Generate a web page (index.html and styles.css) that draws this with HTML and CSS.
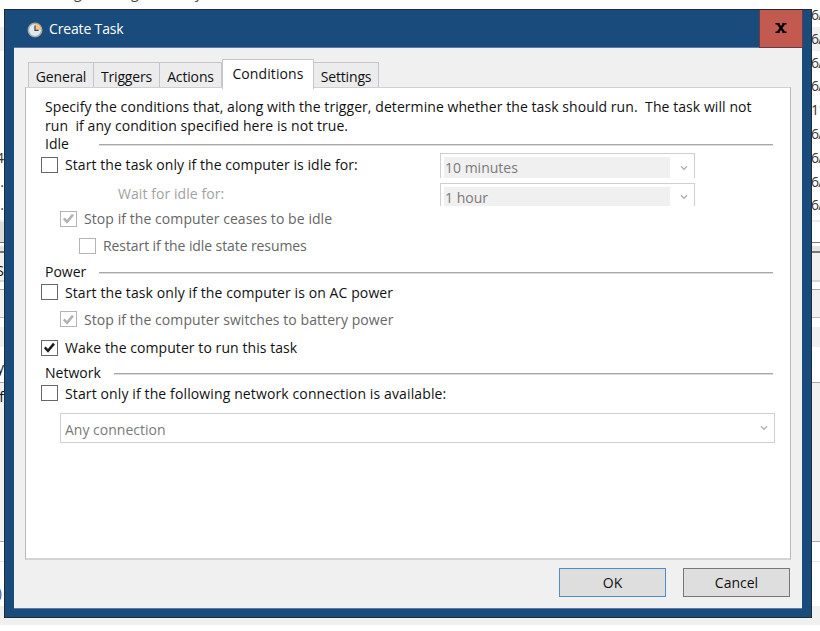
FILE: index.html
```
<!DOCTYPE html>
<html lang="en">
  <head>
    <meta charset="UTF-8" />
    <meta name="viewport" content="width=device-width, initial-scale=1.0">
    <title>Create Task</title>
    <link rel="stylesheet" href="styles.css">
  </head>
  <body>
    <!-- Task Scheduler window behind the dialog -->
    <div class="backdrop">
      <div class="top-line"><span>g</span><span>g</span><span>y</span></div>
      <div class="task-list">
        <div class="task-row"><span></span><span>6/</span></div>
        <div class="task-row selected"><span></span><span>6/</span></div>
        <div class="task-row"><span></span><span>6/</span></div>
        <div class="task-row"><span></span><span>6/</span></div>
        <div class="task-row"><span></span><span>11</span></div>
        <div class="task-row"><span></span><span>6/</span></div>
        <div class="task-row"><span>4</span><span>6/</span></div>
        <div class="task-row"><span>3.</span><span>6/</span></div>
        <div class="task-row"><span>-.</span><span>6/</span></div>
      </div>
      <div class="scroll-row"><div class="scroll-thumb"></div></div>
      <div class="splitter"></div>
      <div class="strip strip-tabs"><span>S</span></div>
      <div class="strip strip-gap"></div>
      <div class="strip strip-header"></div>
      <div class="strip strip-space"></div>
      <div class="strip strip-label"></div>
      <div class="strip strip-field"><span>y</span></div>
      <div class="strip strip-body"><span>f</span></div>
      <div class="strip strip-line"></div>
      <div class="strip strip-link"><span>)</span></div>
      <div class="strip strip-status"></div>
    </div>

    <div class="dialog">
      <div class="titlebar">
        <svg class="title-icon" width="16" height="16" viewBox="0 0 16 16">
          <circle cx="8" cy="8" r="7.5" fill="#a9a49c"/>
          <circle cx="8" cy="8" r="6" fill="#dcebf5"/>
          <path d="M8 8V2A6 6 0 0 1 14 8Z" fill="#f5c67e"/>
          <path d="M8 3.6V8.4H11.6" fill="none" stroke="#41474f" stroke-width="1.3"/>
        </svg>
        <span class="title">Create Task</span>
        <button class="close">
          <svg width="12" height="12" viewBox="0 0 12 12">
            <path d="M0.5 1.7H4.6M7.4 1.7H11.5M0.5 10.3H4.6M7.4 10.3H11.5" stroke="#000" stroke-width="1.4"/>
            <path d="M2.6 1.4L9.4 10.6M9.4 1.4L2.6 10.6" stroke="#000" stroke-width="2.4"/>
          </svg>
        </button>
      </div>

      <div class="client">
        <div class="tabs">
          <div class="tab tab-general">General</div>
          <div class="tab tab-triggers">Triggers</div>
          <div class="tab tab-actions">Actions</div>
          <div class="tab tab-conditions active">Conditions</div>
          <div class="tab tab-settings">Settings</div>
        </div>

        <div class="pane">
          <p class="intro">Specify the conditions that, along with the trigger, determine whether the task should run.&nbsp; The task will not<br>run&nbsp; if any condition specified here is not true.</p>

          <div class="group-head head-idle"><span>Idle</span><i></i></div>
          <div class="row row-idle">
            <span class="box"></span>
            <span class="label">Start the task only if the computer is idle for:</span>
            <div class="combo"><span class="value">10 minutes</span>
              <svg class="arrow" width="8" height="6" viewBox="0 0 8 6"><path d="M1 1.2L4 4.2L7 1.2"/></svg>
            </div>
          </div>
          <div class="row row-wait">
            <span class="label faint">Wait for idle for:</span>
            <div class="combo"><span class="value">1 hour</span>
              <svg class="arrow" width="8" height="6" viewBox="0 0 8 6"><path d="M1 1.2L4 4.2L7 1.2"/></svg>
            </div>
          </div>
          <div class="row row-stop disabled">
            <span class="box"><svg width="13" height="13" viewBox="0 0 13 13"><path d="M1.8 6.4L5 9.8L11 2.6"/></svg></span>
            <span class="label">Stop if the computer ceases to be idle</span>
          </div>
          <div class="row row-restart disabled">
            <span class="box"></span>
            <span class="label">Restart if the idle state resumes</span>
          </div>

          <div class="group-head head-power"><span>Power</span><i></i></div>
          <div class="row row-ac">
            <span class="box"></span>
            <span class="label">Start the task only if the computer is on AC power</span>
          </div>
          <div class="row row-battery disabled">
            <span class="box"><svg width="13" height="13" viewBox="0 0 13 13"><path d="M1.8 6.4L5 9.8L11 2.6"/></svg></span>
            <span class="label">Stop if the computer switches to battery power</span>
          </div>
          <div class="row row-wake">
            <span class="box"><svg width="13" height="13" viewBox="0 0 13 13"><path d="M1.8 6.4L5 9.8L11 2.6"/></svg></span>
            <span class="label">Wake the computer to run this task</span>
          </div>

          <div class="group-head head-network"><span>Network</span><i></i></div>
          <div class="row row-network">
            <span class="box"></span>
            <span class="label">Start only if the following network connection is available:</span>
          </div>
          <div class="combo combo-wide"><span class="value">Any connection</span>
            <svg class="arrow" width="8" height="6" viewBox="0 0 8 6"><path d="M1 1.2L4 4.2L7 1.2"/></svg>
          </div>
        </div>

        <div class="buttons">
          <button class="btn btn-default">OK</button>
          <button class="btn">Cancel</button>
        </div>
      </div>
    </div>
  </body>
</html>
```
FILE: styles.css
```
* {
  box-sizing: border-box;
}

body {
  margin: 0;
  width: 820px;
  height: 631px;
  overflow: hidden;
  position: relative;
  background: #fff;
  font-family: "Open Sans", "Noto Sans", sans-serif;
  font-size: 14px;
  color: #111;
}

/* window behind */
.backdrop {
  display: flex;
  flex-direction: column;
  height: 631px;
}

.top-line {
  height: 3px;
  padding: 0 0 1px 74px;
  line-height: 19px;
  display: flex;
  align-items: flex-end;
  overflow: hidden;
  color: #444;
}

.top-line span {
  width: 57px;
}

.top-line span:nth-child(2) {
  width: 64px;
}

.task-list {
  height: 217px;
  display: grid;
  grid-template-rows: repeat(9, 23.8px);
}

.task-row {
  display: flex;
  justify-content: space-between;
  line-height: 24px;
  white-space: nowrap;
  color: #333;
}

.task-row.selected {
  background: #f0f0f0;
}

.task-row span:first-child {
  width: 4px;
  display: flex;
  justify-content: flex-end;
}

.task-row span:last-child {
  width: 9px;
  letter-spacing: -0.8px;
}

.scroll-row {
  height: 23px;
  border-top: 2px solid #ebebeb;
  border-bottom: 1px solid #777;
}

.scroll-thumb {
  width: 200px;
  height: 20px;
  background: #dcdcdc;
}

.splitter {
  height: 10px;
  border-bottom: 2px solid #777;
  background: linear-gradient(#fff 3px, #e4e4e4 3px);
}

.strip {
  overflow: hidden;
}

.strip span {
  display: flex;
  justify-content: flex-end;
  width: 4px;
}

.strip-tabs {
  height: 29px;
  line-height: 36px;
  background: #f0f0f0;
  border-bottom: 2px solid #d5d5da;
}

.strip-gap {
  height: 7px;
}

.strip-header {
  height: 29px;
  background: #f0f0f0;
  border-top: 1px solid #aaa;
  border-bottom: 1px solid #bbb;
}

.strip-space {
  height: 9px;
}

.strip-label {
  height: 20px;
  background: #f0f0f0;
}

.strip-field {
  height: 36px;
  line-height: 42px;
  border-bottom: 1px solid #aaa;
}

.strip-body {
  height: 159px;
  line-height: 28px;
  background: #f0f0f0;
  border-bottom: 1px solid #aaa;
}

.strip-line {
  height: 20px;
  border-bottom: 1px solid #e8e8e8;
}

.strip-link {
  height: 44px;
  line-height: 62px;
  color: #4a4a9a;
}

.strip-link span {
  width: 2px;
}

.strip-status {
  height: 19px;
  background: #f0f0f0;
}

/* dialog */
.dialog {
  position: absolute;
  left: 4px;
  top: 9px;
  width: 808px;
  height: 609px;
  padding: 0 9px 8px;
  display: flex;
  flex-direction: column;
  background: #1a4b7d;
  border: 1px solid #222a33;
}

.titlebar {
  display: flex;
  align-items: center;
  height: 38px;
  margin-right: -1px;
  border-bottom: 1px solid #5a7ba3;
}

.title-icon {
  margin: 2px 0 0 13px;
}

.title {
  flex: 1;
  margin-left: 6px;
  color: #fff;
  letter-spacing: -0.15px;
}

.close {
  width: 44px;
  height: 38px;
  margin-bottom: -1px;
  padding: 0 0 2px;
  display: flex;
  align-items: center;
  justify-content: center;
  background: #c25a50;
  border: 1px solid #6b3a45;
  border-top: 0;
}

.client {
  flex: 1;
  padding: 11px 11px 0 11px;
  background: #f0f0f0;
  border-bottom: 1px solid #5a7ba3;
}

.tabs {
  display: flex;
  align-items: flex-end;
  height: 28px;
  padding-left: 3px;
  letter-spacing: -0.15px;
}

.tab {
  height: 25px;
  line-height: 28px;
  text-align: center;
  overflow: hidden;
  background: #ececec;
  border: 1px solid #c3c6cb;
  border-bottom: 0;
  border-left-width: 0;
}

.tab-general {
  width: 66px;
  border-left-width: 1px;
}

.tab-triggers {
  width: 66px;
}

.tab-actions {
  width: 62px;
}

.tab-conditions {
  width: 92px;
  letter-spacing: 0.1px;
}

.tab-settings {
  width: 65px;
}

.tab.active {
  position: relative;
  height: 30px;
  line-height: 28px;
  margin-bottom: -2px;
  background: #fff;
  border-left-width: 1px;
}

.pane {
  height: 473px;
  padding: 9px 15px 0;
  background: #fff;
  border: 1px solid #b9babd;
  border-top: 1px solid #cfcfd4;
  border-bottom: 2px solid #d3d3d8;
}

.intro {
  height: 38px;
  margin: 0 0 0 4px;
  line-height: 19px;
  letter-spacing: 0.07px;
  white-space: nowrap;
}

.group-head {
  display: flex;
  align-items: center;
  height: 18px;
  line-height: 18px;
  padding-left: 4px;
  margin-right: 2px;
}

.group-head span {
  width: 54px;
}

.group-head i {
  flex: 1;
  height: 2px;
  margin-top: 2px;
  border-top: 1px solid #a8a8a8;
  background: #dcdcdc;
}

.head-power {
  height: 20px;
}

.head-network span {
  width: 69px;
}

.row {
  display: flex;
  align-items: center;
  height: 27px;
  letter-spacing: 0.07px;
}

.box {
  width: 17px;
  height: 16px;
  display: flex;
  align-items: center;
  justify-content: center;
  border: 1px solid #666;
  background: #fff;
}

.box svg path {
  fill: none;
  stroke: #1a1a1a;
  stroke-width: 2.5;
}

.label {
  margin-left: 7px;
  white-space: nowrap;
}

.disabled .box {
  border-color: #b4b4b8;
}

.disabled .box path {
  stroke: #b2b2b2;
}

.disabled .label {
  color: #666;
}

.label.faint {
  color: #a2a2a2;
}

.row-idle {
  height: 25px;
  margin-bottom: 5px;
}

.row-idle .box,
.row-idle .label {
  margin-bottom: 2px;
}

.row-wait {
  height: 23px;
}

.row-wait .label {
  margin-left: 77px;
  margin-bottom: 3px;
}

.row-stop {
  height: 25px;
  padding-left: 19px;
}

.row-restart {
  height: 29px;
  margin-bottom: 2px;
  padding-left: 38px;
  letter-spacing: -0.09px;
}

.row-ac {
  height: 20px;
  letter-spacing: 0.1px;
}

.row-battery {
  height: 34px;
  padding-left: 19px;
}

.row-wake {
  height: 23px;
}

.head-network {
  height: 27px;
}

.row-network {
  height: 14px;
  letter-spacing: 0.12px;
}

.combo {
  display: flex;
  align-items: stretch;
  width: 255px;
  height: 100%;
  margin-left: auto;
  margin-right: 80px;
  padding: 3px 6px 0 3px;
  border: 1px solid #cfd0d2;
  border-bottom: 0;
  letter-spacing: 0;
  color: #7a7a7a;
}

.combo .value {
  width: 226px;
  padding-left: 1px;
  line-height: 22px;
  overflow: hidden;
  background: #f0f0f0;
}

.combo .arrow {
  align-self: center;
  margin-left: auto;
}

.arrow path {
  fill: none;
  stroke: #b0b0b0;
  stroke-width: 1.4;
}

.combo-wide {
  width: 715px;
  height: 30px;
  margin: 13px 0 0 19px;
  padding: 0 6px 0 4px;
  border-bottom: 1px solid #cfd0d2;
}

.combo-wide .value {
  padding-left: 0;
  line-height: 31px;
  background: none;
}

.buttons {
  display: flex;
  justify-content: flex-end;
  gap: 17px;
  padding: 8px 1px 0 0;
}

.btn {
  width: 107px;
  height: 29px;
  padding: 0;
  font: inherit;
  color: #111;
  background: #dedede;
  border: 1px solid #777;
}

.btn-default {
  border-color: #4d8fc4;
}
```
